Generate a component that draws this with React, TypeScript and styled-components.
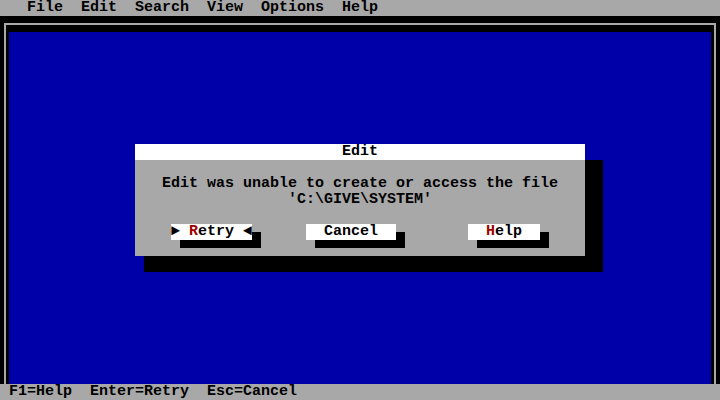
import React from "react";
import styled, { createGlobalStyle } from "styled-components";

const CELL = 9;
const LINE = 16;
const GRAY = "#a8a8a8";
const BLUE = "#0000a8";
const RED = "#a00000";

const Global = createGlobalStyle`
  html, body {
    margin: 0;
    padding: 0;
    width: 720px;
    height: 400px;
    overflow: hidden;
    background: #000;
  }
  #root {
    width: 720px;
    height: 400px;
  }
`;

const Screen = styled.div`
  position: relative;
  width: 720px;
  height: 400px;
  display: flex;
  flex-direction: column;
  background: #000;
  font-family: "Liberation Mono", "DejaVu Sans Mono", monospace;
  font-size: 15px;
  font-weight: 700;
  line-height: ${LINE}px;
  color: #000;
  white-space: pre;
`;

const MenuBar = styled.div`
  height: ${LINE}px;
  background: ${GRAY};
  display: flex;
  gap: ${CELL * 2}px;
  padding-left: ${CELL * 3}px;
`;

const MenuItem = styled.span`
  display: block;
`;

const Desktop = styled.div`
  flex: 1;
  display: flex;
  background: #000;
  padding: 7px 4px 0 4px;
`;

const Frame = styled.div`
  flex: 1;
  display: flex;
  border: 2px solid ${GRAY};
  border-bottom: none;
  padding: 7px 3px 0 3px;
`;

const EditArea = styled.div`
  flex: 1;
  background: ${BLUE};
`;

const StatusBar = styled.div`
  height: ${LINE}px;
  background: ${GRAY};
  padding-left: ${CELL}px;
`;

const Overlay = styled.div`
  position: absolute;
  inset: 0;
  display: flex;
  align-items: center;
  justify-content: center;
`;

const Dialog = styled.div`
  width: ${CELL * 50}px;
  display: flex;
  flex-direction: column;
  box-shadow: ${CELL}px ${LINE}px 0 #000, ${CELL * 2}px ${LINE}px 0 #000;
`;

const TitleBar = styled.div`
  height: ${LINE}px;
  background: #fff;
  text-align: center;
`;

const Body = styled.div`
  background: ${GRAY};
  padding: ${LINE}px 0;
  display: flex;
  flex-direction: column;
`;

const Message = styled.div`
  text-align: center;
  height: ${LINE}px;
`;

const ButtonRow = styled.div`
  margin-top: ${LINE}px;
  display: grid;
  grid-template-columns: repeat(50, ${CELL}px);
  height: ${LINE}px;
`;

const Button = styled.div<{ $col: number; $span: number }>`
  grid-column: ${(p) => p.$col} / span ${(p) => p.$span};
  background: #fff;
  height: ${LINE}px;
  box-shadow: ${CELL}px 8px 0 #000;
`;

const Hot = styled.span`
  color: ${RED};
`;

export default function App() {
  return (
    <>
      <Global />
      <Screen>
        <MenuBar>
          {["File", "Edit", "Search", "View", "Options", "Help"].map((m) => (
            <MenuItem key={m}>{m}</MenuItem>
          ))}
        </MenuBar>
        <Desktop>
          <Frame>
            <EditArea />
          </Frame>
        </Desktop>
        <StatusBar>F1=Help  Enter=Retry  Esc=Cancel</StatusBar>
        <Overlay>
          <Dialog>
            <TitleBar>Edit</TitleBar>
            <Body>
              <Message>Edit was unable to create or access the file</Message>
              <Message>'C:\GIVE\SYSTEM'</Message>
              <ButtonRow>
                <Button $col={5} $span={9}>
                  ► <Hot>R</Hot>etry ◄
                </Button>
                <Button $col={20} $span={10}>
                  {"  Cancel  "}
                </Button>
                <Button $col={38} $span={8}>
                  {"  "}
                  <Hot>H</Hot>
                  {"elp  "}
                </Button>
              </ButtonRow>
            </Body>
          </Dialog>
        </Overlay>
      </Screen>
    </>
  );
}
